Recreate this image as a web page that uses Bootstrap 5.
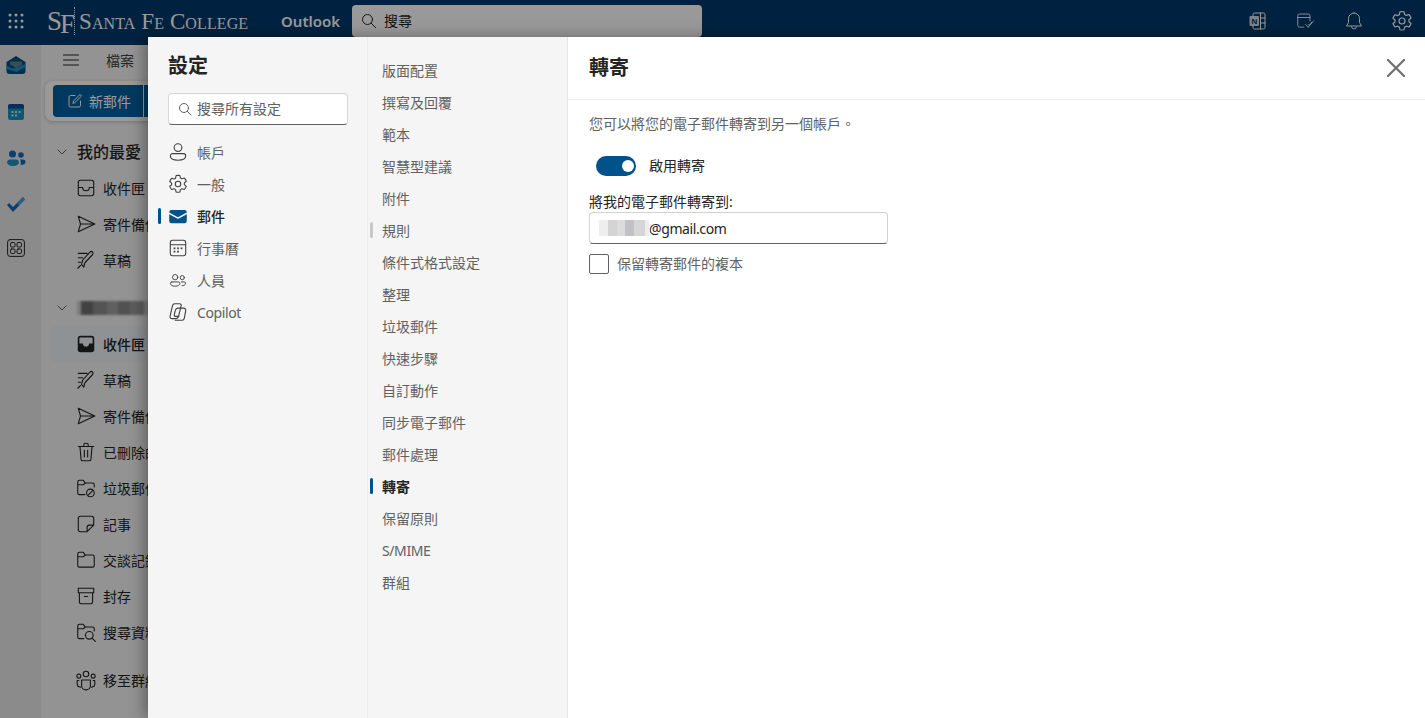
<!DOCTYPE html>
<html lang="zh-Hant">
<head>
<meta charset="utf-8">
<title>設定 - 轉寄</title>
<link href="https://cdn.jsdelivr.net/npm/bootstrap@5.3.0/dist/css/bootstrap.min.css" rel="stylesheet">
<style>
:root{--ui:"Noto Sans","Noto Sans CJK TC",sans-serif;--brand:#00528a;--btn:#00609f}
html,body{height:718px;overflow:hidden}
body{font-family:var(--ui);font-size:14px;color:#242424;background:#f5f5f5;position:relative}
svg{display:block;flex:none}
.ln{fill:none;stroke:currentColor;stroke-width:1;stroke-linecap:round;stroke-linejoin:round}
.lat{letter-spacing:-.4px}
.topbar{height:45px;background:#00396c;color:#fff;padding:0 0 3px 0}
.waffle{width:32px}
.brand-mark{font-family:"Liberation Serif",serif;color:#fff;width:249px;padding-left:15px}
.sf{font-size:27px;line-height:1;width:27px;white-space:nowrap}
.sf b{font-weight:400;position:relative;top:3px;margin-left:-2px}
.dots{border-left:1px dotted #fff;height:28px;margin:0 4px 0 0}
.college{font-size:23px;font-variant:small-caps;line-height:1;white-space:nowrap;letter-spacing:.1px}
.app-name{font-weight:600;font-size:15px;width:63px}
.top-search{width:350px;height:32px;background:#fff;border-radius:4px;color:#242424;padding-left:9px;gap:7px;margin-left:8px}
.top-search span{margin-top:-2px}
.top-icons{margin-right:-1px}
.top-ic{width:48px;height:24px}
.rail{width:41px;background:#e8e8e8;padding-left:6px}
.rail-ic{height:46.5px}
.rail-ic:first-child{margin-top:-3px}
.pane{width:300px}
.tools{height:30px;margin-bottom:6px;padding-left:22px;gap:27px;color:#424242}
.tools svg{color:#242424}
.new-wrap{margin-left:4px;height:40px;width:300px;background:#fff;border-radius:8px 0 0 8px;box-shadow:0 1px 4px rgba(0,0,0,.2);padding:4px 8px}
.new-btn{background:var(--btn);color:#fff;width:90px;height:32px;border-radius:4px 0 0 4px;padding-left:14px;gap:6px}
.new-sep{width:1px;height:32px;background:#fff}
.new-next{background:var(--btn);width:60px;height:32px}
.fold-head{height:36px;padding-left:15px;gap:9px;font-size:16px;font-weight:500}
.fold-head.first{margin-top:13px}
.fold-row{height:36px;padding-left:34px;gap:6px;white-space:nowrap;color:#242424}
.fold-row.on{background:#eef3f7;margin-left:9px;padding-left:25px;border-radius:4px;font-weight:500}
.blur-name{width:74px;height:14px;background:linear-gradient(90deg,#cfcfcf 0 5%,#6f6f6f 5% 22%,#8c8c8c 22% 40%,#a0a0a0 40% 56%,#888 56% 72%,#9a9a9a 72% 90%,#cfcfcf 90%);filter:blur(1px)}
.scrim{inset:0;background:rgba(0,0,0,.4)}
.settings{left:148px;top:37px;right:0;bottom:0;box-shadow:-4px 0 14px rgba(0,0,0,.35)}
.col-a{width:219px;background:#f5f5f5;padding:0 19px 0 20px}
.col-b{width:201px;background:#f5f5f5;border-left:1px solid #ececec;border-right:1px solid #e6e6e6;padding-top:17px}
.col-c{background:#fff;min-width:0}
.set-title{font-size:20px;font-weight:600;margin:15px 0 0;line-height:28px;color:#242424}
.set-search{margin-top:13px;height:32px;background:#fff;border:1px solid #d6d6d6;border-bottom-color:#616161;border-radius:4px;color:#616161;padding-left:9px;gap:5px}
.set-search span{margin-top:-2px}
.nav-list{margin-top:11px}
.cat{height:32px;gap:8px;color:#616161;position:relative;margin-left:-1px}
.cat svg{color:#424242}
.cat.on{color:#242424;font-weight:500}
.cat.on::before,.sub.on::before,.sub.mark-grey::before{content:"";position:absolute;width:3px;height:16px;border-radius:2px;background:var(--brand);top:8px}
.cat.on::before{left:-9px}
.cat-ic-small{width:22px;height:19px}
.sub{height:32px;padding-left:14px;color:#616161;position:relative}
.sub.on{color:#242424;font-weight:600}
.sub.on::before,.sub.mark-grey::before{left:2px}
.sub.mark-grey::before{background:#c8c8c8}
.pane-head{height:63px;border-bottom:1px solid #ececec;padding:0 20px 0 21px}
.pane-title{font-size:20px;font-weight:600;margin:0}
.close-x{color:#6f6f6f;background:none;border:0;padding:0;margin-top:-1px}
.pane-body{padding:0 21px}
.intro{margin:15px 0 0;line-height:18px;color:#616161}
.sw-row{margin-top:23px;padding-left:7px;height:20px;gap:13px}
.sw-row label{margin-top:-2px}
.sw-row .form-check-input{width:40px;height:20px;margin:0;border:0;background-position:right 2px center;background-size:16px;background-color:var(--brand);box-shadow:none;float:none}
.sw-row.form-switch{min-height:0}
.field-lbl{display:block;margin:16px 0 0;line-height:20px;color:#242424}
.mail-box{width:299px;height:32px;border:1px solid #d1d1d1;border-bottom-color:#616161;border-radius:4px;padding:0 9px;position:relative;color:#242424}
.mask{width:50px;height:16px;background:linear-gradient(90deg,#eee 0 18%,#d4d4d4 18% 36%,#dcdcdc 36% 52%,#c2c2c6 52% 70%,#d6d6d6 70% 92%,#eee 92%);filter:blur(.5px)}
.keep{margin-top:10px;gap:8px;color:#616161}
.keep .form-check-input{width:20px;height:20px;margin:0;border:1px solid #616161;border-radius:2px;float:none}
.keep.form-check{padding:0;min-height:0}
.keep label{line-height:20px}
</style>
</head>
<body>
<svg width="0" height="0" style="position:absolute">
  <defs>
    <symbol id="i-inbox" viewBox="0 0 20 20"><path class="ln" d="M5 3h10a2 2 0 0 1 2 2v10a2 2 0 0 1-2 2H5a2 2 0 0 1-2-2V5a2 2 0 0 1 2-2zM3 9.500h4a3 3 0 0 0 6 0h4"/></symbol>
    <symbol id="i-inbox-f" viewBox="0 0 20 20"><path fill="currentColor" d="M5 2.500h10A2.500 2.500 0 0 1 17.500 5v10a2.500 2.500 0 0 1-2.500 2.500H5A2.500 2.500 0 0 1 2.500 15V5A2.500 2.500 0 0 1 5 2.500zM4 9.500h3.200a2.800 2.800 0 0 0 5.600 0H16V5a1 1 0 0 0-1-1H5a1 1 0 0 0-1 1z" fill-rule="evenodd"/></symbol>
    <symbol id="i-send" viewBox="0 0 20 20"><path class="ln" d="M3 3l15 7-15 7 2-7zM5 10h13"/></symbol>
    <symbol id="i-draft" viewBox="0 0 20 20"><path class="ln" d="M8 16.500l1-4 7-7.500a1.600 1.600 0 0 0-2.400-2.200L7 10l-1 4zM3 4h8M3 8h4M3 12h2M2.500 17.500L5 15"/></symbol>
    <symbol id="i-trash" viewBox="0 0 20 20"><path class="ln" d="M3 5h14M8 5V3.500A1.500 1.500 0 0 1 9.500 2h1A1.500 1.500 0 0 1 12 3.500V5M4.500 5l1 11.500A1.500 1.500 0 0 0 7 18h6a1.500 1.500 0 0 0 1.500-1.500l1-11.500M8.500 8.500v6M11.500 8.500v6"/></symbol>
    <symbol id="i-junk" viewBox="0 0 20 20"><path class="ln" d="M9 16H4a1.500 1.500 0 0 1-1.500-1.500v-10A1.500 1.500 0 0 1 4 3h3.500l2 2.500H16a1.500 1.500 0 0 1 1.500 1.500v2M2.500 7h5l2-1.500"/><circle class="ln" cx="14" cy="14.500" r="3.500"/><path class="ln" d="M11.700 16.800l4.600-4.600"/></symbol>
    <symbol id="i-note" viewBox="0 0 20 20"><path class="ln" d="M5 3h10a2 2 0 0 1 2 2v6l-6 6H5a2 2 0 0 1-2-2V5a2 2 0 0 1 2-2zM17 11h-4a2 2 0 0 0-2 2v4"/></symbol>
    <symbol id="i-folder" viewBox="0 0 20 20"><path class="ln" d="M4 3h3.500l2 2.500H16a1.500 1.500 0 0 1 1.500 1.500v8a1.500 1.500 0 0 1-1.500 1.500H4A1.500 1.500 0 0 1 2.500 15V4.500A1.500 1.500 0 0 1 4 3zM2.500 7h5l2-1.500"/></symbol>
    <symbol id="i-archive" viewBox="0 0 20 20"><path class="ln" d="M3 3h14v4H3zM4 7v8.500A1.500 1.500 0 0 0 5.500 17h9a1.500 1.500 0 0 0 1.500-1.500V7M8.500 10.500h3"/></symbol>
    <symbol id="i-search-f" viewBox="0 0 20 20"><path class="ln" d="M8 16H4a1.500 1.500 0 0 1-1.500-1.500v-10A1.500 1.500 0 0 1 4 3h3.500l2 2.500H16a1.500 1.500 0 0 1 1.500 1.500v2M2.500 7h5l2-1.500"/><circle class="ln" cx="13" cy="13" r="3.500"/><path class="ln" d="M15.500 15.500l3 3"/></symbol>
    <symbol id="i-group" viewBox="0 0 20 20"><circle class="ln" cx="10" cy="4.500" r="2.500"/><circle class="ln" cx="3.500" cy="6.500" r="1.800"/><circle class="ln" cx="16.500" cy="6.500" r="1.800"/><path class="ln" d="M6 10h8v5a4 4 0 0 1-8 0zM3.500 10.500H2v3a3 3 0 0 0 3 3M16.500 10.500H18v3a3 3 0 0 1-3 3"/></symbol>
    <symbol id="i-user" viewBox="0 0 20 20"><circle class="ln" cx="10" cy="6" r="3.500"/><path class="ln" d="M5 11.500h10a2 2 0 0 1 2 2c0 2.500-3 4-7 4s-7-1.500-7-4a2 2 0 0 1 2-2z"/></symbol>
    <symbol id="i-gear" viewBox="0 0 20 20"><path class="ln" d="M8.300 2.300a8 8 0 0 1 3.400 0l.5 2.200 1.400.8 2.200-.7a8 8 0 0 1 1.700 2.900l-1.700 1.500v1.600l1.700 1.500a8 8 0 0 1-1.700 2.900l-2.200-.7-1.400.8-.5 2.200a8 8 0 0 1-3.400 0l-.5-2.200-1.400-.8-2.200.7a8 8 0 0 1-1.700-2.900L4.200 10.800V9.200L2.500 7.700a8 8 0 0 1 1.700-2.900l2.200.7 1.400-.8z"/><circle class="ln" cx="10" cy="10" r="2.500"/></symbol>
    <symbol id="i-mail-f" viewBox="0 0 20 20"><path fill="#00528a" d="M2 6.500a2 2 0 0 1 2-2h12a2 2 0 0 1 2 2v.300l-8 4.400-8-4.400zM2 8.300l7.700 4.200a.6.6 0 0 0 .6 0L18 8.300V14.500a2 2 0 0 1-2 2H4a2 2 0 0 1-2-2z"/></symbol>
    <symbol id="i-cal" viewBox="0 0 20 20"><path class="ln" d="M5 3h10a2 2 0 0 1 2 2v10a2 2 0 0 1-2 2H5a2 2 0 0 1-2-2V5a2 2 0 0 1 2-2zM3 7h14"/><g fill="currentColor"><rect x="6" y="9.500" width="1.600" height="1.600"/><rect x="9.200" y="9.500" width="1.600" height="1.600"/><rect x="12.400" y="9.500" width="1.600" height="1.600"/><rect x="6" y="12.500" width="1.600" height="1.600"/><rect x="9.200" y="12.500" width="1.600" height="1.600"/></g></symbol>
    <symbol id="i-people" viewBox="0 0 20 20"><circle class="ln" cx="7" cy="6.500" r="2.800"/><circle class="ln" cx="14.500" cy="7" r="2.200"/><path class="ln" d="M3.500 11.500h7A1.500 1.500 0 0 1 12 13c0 2-2.300 3-5 3S2 15 2 13a1.500 1.500 0 0 1 1.500-1.500zM13.500 11.500h3A1.500 1.500 0 0 1 18 13c0 1.500-1.600 2.500-3.700 2.500"/></symbol>
    <symbol id="i-copilot" viewBox="0 0 20 20"><path class="ln" d="M7 2.500h4.500c1 0 1.600.8 1.400 1.800L10.500 14c-.3 1.200-1 2-2.200 2H4.500C3.300 16 2.500 15 2.800 13.800L5 4.300C5.300 3.100 6 2.500 7 2.500z"/><path class="ln" d="M9.500 6.500h5.700c1.200 0 2 1 1.800 2.200l-1.300 7.100c-.2 1.200-1 1.700-2 1.700H7.500M9.800 6.500c-1.200 0-1.900.8-2.200 2L6.600 12.500c-.2 1 .5 1.500 1.300 1.500h2.800"/></symbol>
  </defs>
</svg>

<div class="d-flex flex-column" style="height:718px">
  <header class="topbar d-flex align-items-center">
    <div class="waffle d-flex justify-content-center">
      <svg width="16" height="16" viewBox="0 0 16 16" fill="#fff"><circle cx="2" cy="2" r="1.500"/><circle cx="8" cy="2" r="1.500"/><circle cx="14" cy="2" r="1.500"/><circle cx="2" cy="8" r="1.500"/><circle cx="8" cy="8" r="1.500"/><circle cx="14" cy="8" r="1.500"/><circle cx="2" cy="14" r="1.500"/><circle cx="8" cy="14" r="1.500"/><circle cx="14" cy="14" r="1.500"/></svg>
    </div>
    <div class="brand-mark d-flex align-items-center">
      <span class="sf">S<b>F</b></span><span class="dots"></span><span class="college">Santa Fe College</span>
    </div>
    <div class="app-name text-white">Outlook</div>
    <div class="top-search d-flex align-items-center">
      <svg width="16" height="16" viewBox="0 0 16 16"><circle class="ln" cx="6.500" cy="6.500" r="5"/><path class="ln" d="M10.200 10.200l4.500 4.500"/></svg>
      <span>搜尋</span>
    </div>
    <div class="top-icons d-flex align-items-center ms-auto">
      <div class="top-ic d-flex align-items-center justify-content-center"><svg width="20" height="20" viewBox="0 0 20 20"><path class="ln" d="M5 5V3.500A1.500 1.500 0 0 1 6.500 2h9A1.500 1.500 0 0 1 17 3.500v13a1.500 1.500 0 0 1-1.500 1.500h-9A1.500 1.500 0 0 1 5 16.500V15M12.500 2v16M12.500 7H17M12.500 12H17"/><rect x="1.500" y="5" width="9.500" height="10" rx="1" fill="#fff" opacity=".8"/><text x="3.500" y="13" font-size="8" font-weight="700" fill="#00396c" font-family="Liberation Sans">N</text></svg></div>
      <div class="top-ic d-flex align-items-center justify-content-center"><svg width="21" height="18" viewBox="0 0 24 20"><path class="ln" d="M9 17H4a2 2 0 0 1-2-2V4a2 2 0 0 1 2-2h10a2 2 0 0 1 2 2v6M2 6h14M11 14l3 3M14 17l6-7M14 14l1 1 3-3.500"/></svg></div>
      <div class="top-ic d-flex align-items-center justify-content-center"><svg width="18" height="20" viewBox="0 0 18 20"><path class="ln" d="M9 2a5.500 5.500 0 0 1 5.500 5.500v4l2 3.500h-15l2-3.500v-4A5.500 5.500 0 0 1 9 2zM6.500 15.500a2.500 2.500 0 0 0 5 0"/></svg></div>
      <div class="top-ic d-flex align-items-center justify-content-center"><svg width="24" height="24"><use href="#i-gear"/></svg></div>
    </div>
  </header>

  <div class="d-flex flex-grow-1">
    <nav class="rail d-flex flex-column" aria-label="應用程式">
      <div class="rail-ic d-flex align-items-center"><svg width="20" height="18" viewBox="0 0 20 18"><path fill="#004f7f" d="M10 0l9.500 6v9a3 3 0 0 1-3 3h-13a3 3 0 0 1-3-3V6z"/><path fill="#6a7f8c" d="M4 5.500h12v3l-6 3-6-3z"/><path fill="#1f8fc0" d="M.5 9.500l5.500 3 13.500-4.500V11l-9 5-10-3z"/></svg></div>
      <div class="rail-ic d-flex align-items-center"><svg width="18" height="18" viewBox="0 0 18 18" style="margin-left:1px"><rect x="1" y="1" width="16" height="16" rx="2.500" fill="#1a8fc0"/><path fill="#0a4f8f" d="M3.500 1h11A2.500 2.500 0 0 1 17 3.500V5.500H1V3.500A2.500 2.500 0 0 1 3.500 1z"/><g fill="#fff" opacity=".8"><rect x="4.500" y="8" width="2" height="2"/><rect x="8" y="8" width="2" height="2"/><rect x="11.500" y="8" width="2" height="2"/><rect x="4.500" y="11.500" width="2" height="2"/><rect x="8" y="11.500" width="2" height="2"/></g></svg></div>
      <div class="rail-ic d-flex align-items-center"><svg width="20" height="18" viewBox="0 0 20 18"><circle cx="6.500" cy="5" r="3.500" fill="#0f6cbd"/><circle cx="15" cy="6" r="2.800" fill="#0f6cbd"/><path fill="#1f8fc0" d="M1 13a3 3 0 0 1 3-2.500h6a3 3 0 0 1 3 2.500c0 2.500-3 4-6 4s-6-1.500-6-4z"/><path fill="#0f6cbd" d="M14 10.500h3a2.500 2.500 0 0 1 2.500 2.500c0 2-2 3-5 3 .5-1.500.5-4-.5-5.500z"/></svg></div>
      <div class="rail-ic d-flex align-items-center"><svg width="20" height="16" viewBox="0 0 20 16"><path fill="#0f6cbd" d="M1 8l2-2 4 4 10-10 2 2.500L7 15z"/><path fill="#50a0dd" d="M17 0l2 2.500-6 6-2-2.500z"/></svg></div>
      <div class="rail-ic d-flex align-items-center" style="height:40px"><svg width="18" height="18" viewBox="0 0 18 18" style="margin-left:1px;color:#242424"><rect class="ln" x=".6" y=".6" width="16.800" height="16.800" rx="2.500"/><g class="ln"><rect x="3.500" y="3.500" width="4.500" height="4.500" rx="1.200"/><rect x="10" y="3.500" width="4.500" height="4.500" rx="1.200"/><rect x="3.500" y="10" width="4.500" height="4.500" rx="1.200"/><rect x="10" y="10" width="4.500" height="4.500" rx="1.200"/></g></svg></div>
    </nav>

    <div class="pane">
      <div class="tools d-flex align-items-center">
        <svg width="16" height="12" viewBox="0 0 16 12"><path class="ln" d="M.5 1h15M.5 6h15M.5 11h15"/></svg>
        <span>檔案</span>
      </div>
      <div class="new-wrap d-flex">
        <div class="new-btn d-flex align-items-center">
          <svg width="16" height="16" viewBox="0 0 16 16"><path class="ln" d="M8 2.500H3.500A1.500 1.500 0 0 0 2 4v8.500A1.500 1.500 0 0 0 3.500 14H12a1.500 1.500 0 0 0 1.500-1.500V8M6 10l.5-2L13 1.500l1.500 1.500L8 9.500z"/></svg>
          <span>新郵件</span>
        </div>
        <div class="new-sep"></div>
        <div class="new-next"></div>
      </div>
      <div class="fold-head first d-flex align-items-center"><svg width="12" height="12" viewBox="0 0 12 12"><path class="ln" d="M2 4l4 4 4-4" color="#616161"/></svg><span>我的最愛</span></div>
      <div class="fold-row d-flex align-items-center"><svg width="22" height="22"><use href="#i-inbox"/></svg><span>收件匣</span></div>
      <div class="fold-row d-flex align-items-center"><svg width="22" height="22"><use href="#i-send"/></svg><span>寄件備份</span></div>
      <div class="fold-row d-flex align-items-center"><svg width="22" height="22"><use href="#i-draft"/></svg><span>草稿</span></div>
      <div class="fold-head d-flex align-items-center" style="margin-top:12px"><svg width="12" height="12" viewBox="0 0 12 12"><path class="ln" d="M2 4l4 4 4-4" color="#616161"/></svg><span class="blur-name"></span></div>
      <div class="fold-row on d-flex align-items-center"><svg width="22" height="22"><use href="#i-inbox-f"/></svg><span>收件匣</span></div>
      <div class="fold-row d-flex align-items-center"><svg width="22" height="22"><use href="#i-draft"/></svg><span>草稿</span></div>
      <div class="fold-row d-flex align-items-center"><svg width="22" height="22"><use href="#i-send"/></svg><span>寄件備份</span></div>
      <div class="fold-row d-flex align-items-center"><svg width="22" height="22"><use href="#i-trash"/></svg><span>已刪除的郵件</span></div>
      <div class="fold-row d-flex align-items-center"><svg width="22" height="22"><use href="#i-junk"/></svg><span>垃圾郵件</span></div>
      <div class="fold-row d-flex align-items-center"><svg width="22" height="22"><use href="#i-note"/></svg><span>記事</span></div>
      <div class="fold-row d-flex align-items-center"><svg width="22" height="22"><use href="#i-folder"/></svg><span>交談記錄</span></div>
      <div class="fold-row d-flex align-items-center"><svg width="22" height="22"><use href="#i-archive"/></svg><span>封存</span></div>
      <div class="fold-row d-flex align-items-center"><svg width="22" height="22"><use href="#i-search-f"/></svg><span>搜尋資料夾</span></div>
      <div class="fold-row d-flex align-items-center" style="margin-top:12px"><svg width="22" height="22"><use href="#i-group"/></svg><span>移至群組</span></div>
    </div>
  </div>
</div>

<div class="scrim position-absolute"></div>

<section class="settings position-absolute d-flex">
  <div class="col-a">
    <h2 class="set-title">設定</h2>
    <div class="set-search d-flex align-items-center">
      <svg width="14" height="14" viewBox="0 0 14 14"><circle class="ln" cx="6" cy="6" r="4.500"/><path class="ln" d="M9.300 9.300l3.700 3.700"/></svg>
      <span>搜尋所有設定</span>
    </div>
    <div class="nav-list">
      <div class="cat d-flex align-items-center"><svg width="22" height="22"><use href="#i-user"/></svg><span>帳戶</span></div>
      <div class="cat d-flex align-items-center"><svg width="22" height="22"><use href="#i-gear"/></svg><span>一般</span></div>
      <div class="cat on d-flex align-items-center"><svg width="22" height="22"><use href="#i-mail-f"/></svg><span>郵件</span></div>
      <div class="cat d-flex align-items-center"><svg width="22" height="22"><use href="#i-cal"/></svg><span>行事曆</span></div>
      <div class="cat d-flex align-items-center"><svg class="cat-ic-small" viewBox="0 0 20 20"><use href="#i-people"/></svg><span>人員</span></div>
      <div class="cat d-flex align-items-center"><svg width="22" height="22"><use href="#i-copilot"/></svg><span class="lat">Copilot</span></div>
    </div>
  </div>

  <div class="col-b">
    <div class="sub d-flex align-items-center">版面配置</div>
    <div class="sub d-flex align-items-center">撰寫及回覆</div>
    <div class="sub d-flex align-items-center">範本</div>
    <div class="sub d-flex align-items-center">智慧型建議</div>
    <div class="sub d-flex align-items-center">附件</div>
    <div class="sub mark-grey d-flex align-items-center">規則</div>
    <div class="sub d-flex align-items-center">條件式格式設定</div>
    <div class="sub d-flex align-items-center">整理</div>
    <div class="sub d-flex align-items-center">垃圾郵件</div>
    <div class="sub d-flex align-items-center">快速步驟</div>
    <div class="sub d-flex align-items-center">自訂動作</div>
    <div class="sub d-flex align-items-center">同步電子郵件</div>
    <div class="sub d-flex align-items-center">郵件處理</div>
    <div class="sub on d-flex align-items-center">轉寄</div>
    <div class="sub d-flex align-items-center">保留原則</div>
    <div class="sub d-flex align-items-center lat">S/MIME</div>
    <div class="sub d-flex align-items-center">群組</div>
  </div>

  <div class="col-c flex-grow-1">
    <div class="pane-head d-flex align-items-center justify-content-between">
      <h2 class="pane-title">轉寄</h2>
      <button class="close-x" type="button" aria-label="關閉"><svg width="18" height="18" viewBox="0 0 18 18"><path d="M1 1l16 16M17 1L1 17" fill="none" stroke="currentColor" stroke-width="2.200" stroke-linecap="round"/></svg></button>
    </div>
    <div class="pane-body">
      <p class="intro">您可以將您的電子郵件轉寄到另一個帳戶。</p>
      <div class="sw-row form-switch d-flex align-items-center">
        <input class="form-check-input" type="checkbox" role="switch" id="fwd" checked>
        <label for="fwd">啟用轉寄</label>
      </div>
      <label class="field-lbl" for="addr">將我的電子郵件轉寄到:</label>
      <div class="mail-box d-flex align-items-center" id="addr"><span class="mask"></span><span class="lat">@gmail.com</span></div>
      <div class="keep form-check d-flex align-items-center">
        <input class="form-check-input" type="checkbox" id="keep">
        <label for="keep">保留轉寄郵件的複本</label>
      </div>
    </div>
  </div>
</section>
<script src="https://cdn.jsdelivr.net/npm/bootstrap@5.3.0/dist/js/bootstrap.bundle.min.js"></script>
</body>
</html>
